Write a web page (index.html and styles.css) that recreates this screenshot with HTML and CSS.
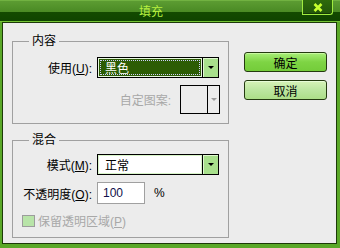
FILE: index.html
```html
<!DOCTYPE html>
<html lang="zh-CN">
<head>
    <meta charset="UTF-8">
    <title>填充</title>
    <link rel="stylesheet" href="styles.css">
</head>
<body>
    <div class="window">
        <div class="titlebar">
            <span class="title">填充</span>
            <span class="close">
                <svg width="10" height="9" viewBox="0 0 10 9"><path d="M1.5 1 L8.5 8 M8.5 1 L1.5 8" stroke="#c8ff30" stroke-width="2.6" fill="none"/></svg>
            </span>
        </div>
        <div class="frame">
            <div class="body">
                <div class="main">
                    <fieldset class="group group-content">
                        <legend>内容</legend>
                        <div class="field">
                            <label class="label">使用(<u>U</u>):</label>
                            <div class="select select-active">
                                <span class="value"><span class="focus">黑色</span></span>
                                <span class="arrow"><i class="tri"></i></span>
                            </div>
                        </div>
                        <div class="pattern-row">
                            <span class="muted">自定图案:</span>
                            <div class="pattern">
                                <span class="swatch"></span>
                                <span class="pattern-arrow"><i class="tri tri-muted"></i></span>
                            </div>
                        </div>
                    </fieldset>

                    <fieldset class="group group-blend">
                        <legend>混合</legend>
                        <div class="field">
                            <label class="label">模式(<u>M</u>):</label>
                            <div class="select">
                                <span class="value">正常</span>
                                <span class="arrow"><i class="tri"></i></span>
                            </div>
                        </div>
                        <div class="field field-opacity">
                            <label class="label">不透明度(<u>O</u>):</label>
                            <div class="input">100</div>
                            <span class="unit">%</span>
                        </div>
                        <div class="check-row">
                            <span class="checkbox"></span>
                            <span class="muted">保留透明区域(<u>P</u>)</span>
                        </div>
                    </fieldset>
                </div>
                <div class="actions">
                    <button class="btn btn-ok">确定</button>
                    <button class="btn btn-cancel">取消</button>
                </div>
            </div>
        </div>
    </div>
</body>
</html>
```

FILE: styles.css
```css
body {
    margin: 0;
    font-family: "Liberation Sans", "Noto Sans CJK SC", sans-serif;
    font-size: 12px;
    color: #000;
}
.window {
    width: 340px;
    height: 248px;
    display: flex;
    flex-direction: column;
    background: #5aa828;
}
.titlebar {
    height: 21px;
    flex: none;
    display: flex;
    padding-right: 7px;
    border-bottom: 1px solid #74c434;
    background: linear-gradient(to bottom, #86c850 0, #5c9c32 1px, #4a8a24 12px, #134a00 12px, #0f4400 21px);
}
.title {
    flex: 1;
    text-align: center;
    color: #b8f040;
    line-height: 20px;
    padding-top: 2px;
}
.close {
    width: 29px;
    height: 14px;
    display: flex;
    align-items: center;
    justify-content: center;
    border: 1px solid #a0ec40;
    border-top: none;
    border-radius: 0 0 3px 0;
    background: linear-gradient(to bottom, #2e6a0c, #22560a);
    box-shadow: inset 0 -1px 0 #143a04;
}
.frame {
    flex: 1;
    display: flex;
    padding: 0 3px 4px 2px;
}
.body {
    flex: 1;
    display: flex;
    align-items: flex-start;
    padding: 11px 0 0 9px;
    border: 1px solid #1c3a08;
    background: #ececec;
}
.main {
    width: 217px;
}
.group {
    margin: 0;
    padding: 8px 8px 9px 9px;
    border: 1px solid #a0a0a0;
    min-inline-size: auto;
}
.group legend {
    padding: 0 3px;
    margin-left: 7px;
    line-height: 15px;
}
.group-blend {
    margin-top: 9px;
    padding-top: 6px;
    padding-bottom: 8px;
}
.field {
    display: flex;
    align-items: center;
}
.label {
    width: 70px;
    margin-right: 5px;
    text-align: right;
    white-space: nowrap;
}
.label u,
.muted u {
    text-underline-offset: 1px;
}
.select {
    width: 122px;
    height: 21px;
    box-sizing: border-box;
    display: flex;
    border: 1px solid #000;
}
.select .value {
    flex: 1;
    display: flex;
    align-items: center;
    padding-left: 6px;
    background: #fff;
    border: 1px solid #d8f4c8;
}
.select-active .value {
    padding: 1px;
    background: #2c5c04;
    border-color: #e8f8e0;
    color: #fff;
}
.focus {
    flex: 1;
    align-self: stretch;
    display: flex;
    align-items: center;
    padding-left: 4px;
    border: 1px dotted #d0d0ff;
}
.arrow {
    width: 15px;
    display: flex;
    align-items: center;
    justify-content: center;
    border-left: 1px solid #000;
    background: #a8e08c;
    box-shadow: inset 1px 1px 0 #e0f8d0;
}
.tri {
    width: 0;
    height: 0;
    border-left: 3px solid transparent;
    border-right: 3px solid transparent;
    border-top: 3px solid #000;
}
.tri-muted {
    border-top-color: #9c9c9c;
}
.pattern-row {
    display: flex;
    justify-content: flex-end;
    align-items: center;
    margin-top: 7px;
}
.muted {
    color: #a8a8a8;
}
.pattern-row .muted {
    margin-right: 9px;
}
.pattern {
    width: 40px;
    height: 29px;
    box-sizing: border-box;
    display: flex;
    border: 1px solid #000;
}
.swatch {
    width: 26px;
    border-right: 1px solid #000;
}
.pattern-arrow {
    flex: 1;
    display: flex;
    align-items: center;
    justify-content: center;
}
.field-opacity {
    margin-top: 7px;
}
.input {
    width: 48px;
    height: 22px;
    box-sizing: border-box;
    padding-left: 5px;
    line-height: 20px;
    border: 1px solid #a0a0a0;
    background: #fff;
    color: #10104a;
}
.unit {
    margin-left: 9px;
}
.check-row {
    display: flex;
    align-items: center;
    margin-top: 8px;
}
.checkbox {
    width: 13px;
    height: 12px;
    box-sizing: border-box;
    margin-right: 3px;
    border: 1px solid #9c9c9c;
    background: #b8e4a8;
}
.actions {
    display: flex;
    flex-direction: column;
    gap: 8px;
    margin: 18px 0 0 15px;
}
.btn {
    width: 83px;
    height: 20px;
    padding: 0;
    border: 1px solid #243a10;
    border-radius: 3px;
    font: inherit;
    color: #000;
}
.btn-ok {
    background: linear-gradient(to bottom, #a8ee78, #7ed444 50%, #74cc3a);
    box-shadow: inset 0 1px 0 #c8f8a0;
}
.btn-cancel {
    background: linear-gradient(to bottom, #d6f2b8, #bce6a0 50%, #acde88);
    box-shadow: inset 0 1px 0 #e8fcd8;
}
```
